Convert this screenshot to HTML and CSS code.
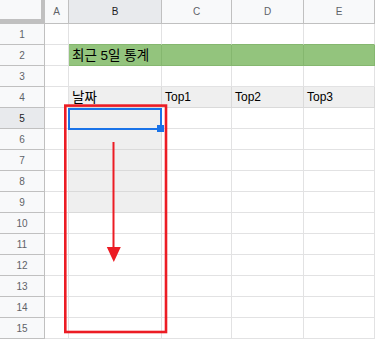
FILE: index.html
```html
<!DOCTYPE html>
<html lang="ko">
<head>
    <meta charset="UTF-8">
    <meta name="viewport" content="width=device-width, initial-scale=1.0">
    <title>최근 5일 통계</title>
    <link rel="stylesheet" href="styles.css">
</head>
<body>
    <div class="sheet">
        <div class="grid">
            <!-- column headers -->
            <div class="corner"></div>
            <div class="col-head">A</div>
            <div class="col-head active">B</div>
            <div class="col-head">C</div>
            <div class="col-head">D</div>
            <div class="col-head">E</div>

            <div class="row-head">1</div>
            <div class="cell"></div><div class="cell above-green"></div><div class="cell above-green"></div><div class="cell above-green"></div><div class="cell above-green"></div>

            <div class="row-head">2</div>
            <div class="cell"></div>
            <div class="cell green ko">최근 5일 통계</div>
            <div class="cell green"></div><div class="cell green"></div><div class="cell green"></div>

            <div class="row-head">3</div>
            <div class="cell"></div><div class="cell"></div><div class="cell"></div><div class="cell"></div><div class="cell"></div>

            <div class="row-head">4</div>
            <div class="cell"></div>
            <div class="cell gray ko">날짜</div>
            <div class="cell gray">Top1</div>
            <div class="cell gray">Top2</div>
            <div class="cell gray">Top3</div>

            <div class="row-head active">5</div>
            <div class="cell"></div><div class="cell gray"></div><div class="cell"></div><div class="cell"></div><div class="cell"></div>
            <div class="row-head">6</div>
            <div class="cell"></div><div class="cell gray"></div><div class="cell"></div><div class="cell"></div><div class="cell"></div>
            <div class="row-head">7</div>
            <div class="cell"></div><div class="cell gray"></div><div class="cell"></div><div class="cell"></div><div class="cell"></div>
            <div class="row-head">8</div>
            <div class="cell"></div><div class="cell gray"></div><div class="cell"></div><div class="cell"></div><div class="cell"></div>
            <div class="row-head">9</div>
            <div class="cell"></div><div class="cell gray"></div><div class="cell"></div><div class="cell"></div><div class="cell"></div>
            <div class="row-head">10</div>
            <div class="cell"></div><div class="cell"></div><div class="cell"></div><div class="cell"></div><div class="cell"></div>
            <div class="row-head">11</div>
            <div class="cell"></div><div class="cell"></div><div class="cell"></div><div class="cell"></div><div class="cell"></div>
            <div class="row-head">12</div>
            <div class="cell"></div><div class="cell"></div><div class="cell"></div><div class="cell"></div><div class="cell"></div>
            <div class="row-head">13</div>
            <div class="cell"></div><div class="cell"></div><div class="cell"></div><div class="cell"></div><div class="cell"></div>
            <div class="row-head">14</div>
            <div class="cell"></div><div class="cell"></div><div class="cell"></div><div class="cell"></div><div class="cell"></div>
            <div class="row-head">15</div>
            <div class="cell"></div><div class="cell"></div><div class="cell"></div><div class="cell"></div><div class="cell"></div>
        </div>

        <!-- selected cell B5 -->
        <div class="selection"></div>
        <div class="fill-handle"></div>

        <!-- red annotation: box + arrow -->
        <svg class="markup" width="375" height="340" viewBox="0 0 375 340">
            <rect x="65.3" y="105.6" width="100.7" height="226.4" fill="none" stroke="#ec1c24" stroke-width="2.6"/>
            <line x1="113.5" y1="142" x2="113.5" y2="250" stroke="#ec1c24" stroke-width="2"/>
            <polygon points="106.8,247 120.8,247 113.8,262" fill="#ec1c24"/>
        </svg>
    </div>
</body>
</html>
```

FILE: styles.css
```css
body {
    margin: 0;
    padding: 0;
    background-color: #fff;
    font-family: "Liberation Sans", "Noto Sans CJK KR", Arial, sans-serif;
    overflow: hidden;
}
.sheet {
    position: relative;
    width: 375px;
    height: 340px;
}
.grid {
    display: grid;
    grid-template-columns: 45px 24px 93px 70px 72px 71px;
    grid-template-rows: 24px repeat(15, 21px);
}
.grid > div {
    box-sizing: border-box;
}
.corner {
    background-color: #f8f9fa;
    border-right: 4px solid #c0c0c0;
    border-bottom: 5px solid #c0c0c0;
}
.col-head {
    background-color: #f8f9fa;
    border-right: 1px solid #c0c0c0;
    border-bottom: 1px solid #c0c0c0;
    color: #5f6368;
    font-size: 10px;
    line-height: 24px;
    text-align: center;
}
.row-head {
    background-color: #f8f9fa;
    border-right: 1px solid #c0c0c0;
    border-bottom: 1px solid #c0c0c0;
    color: #5f6368;
    font-size: 10px;
    line-height: 21px;
    text-align: center;
}
.col-head.active,
.row-head.active {
    background-color: #e8eaed;
    color: #202124;
}
.cell {
    border-right: 1px solid #e2e2e3;
    border-bottom: 1px solid #e2e2e3;
    padding: 0 3px;
    font-size: 12px;
    line-height: 20px;
    color: #000;
    white-space: nowrap;
    overflow: visible;
}
.cell.ko {
    font-size: 13.5px;
    line-height: 21px;
}
.cell.above-green {
    border-bottom-color: #85b76f;
}
.cell.green {
    background-color: #93c47d;
    border-right-color: #85b76f;
    border-bottom-color: #85b76f;
}
.cell.gray {
    background-color: #efefef;
    border-right-color: #dadada;
    border-bottom-color: #dadada;
}
.selection {
    position: absolute;
    left: 68px;
    top: 108px;
    width: 94px;
    height: 22px;
    box-sizing: border-box;
    border: 2px solid #1a73e8;
}
.fill-handle {
    position: absolute;
    left: 157px;
    top: 125px;
    width: 7px;
    height: 7px;
    background-color: #1a73e8;
}
.markup {
    position: absolute;
    left: 0;
    top: 0;
    pointer-events: none;
}
```
